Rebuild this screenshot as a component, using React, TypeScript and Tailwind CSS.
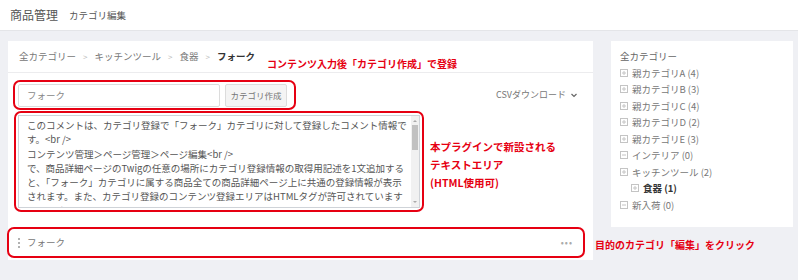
import React from "react";

const treeItems = [
  { label: "親カテゴリA (4)", open: false },
  { label: "親カテゴリB (3)", open: false },
  { label: "親カテゴリC (4)", open: false },
  { label: "親カテゴリD (2)", open: false },
  { label: "親カテゴリE (3)", open: false },
  { label: "インテリア (0)", open: true },
  { label: "キッチンツール (2)", open: false },
  { label: "食器 (1)", open: false, child: true },
  { label: "新入荷 (0)", open: true },
];

const commentLines = [
  "このコメントは、カテゴリ登録で「フォーク」カテゴリに対して登録したコメント情報で",
  "す。<br />",
  "コンテンツ管理＞ページ管理＞ページ編集<br />",
  "で、商品詳細ページのTwigの任意の場所にカテゴリ登録情報の取得用記述を1文追加する",
  "と、「フォーク」カテゴリに属する商品全ての商品詳細ページ上に共通の登録情報が表示",
  "されます。また、カテゴリ登録のコンテンツ登録エリアはHTMLタグが許可されています",
  "ので、<br />",
];

const TreeIcon = ({ open }: { open: boolean }) => (
  <svg width="8" height="8" viewBox="0 0 8 8" className="shrink-0">
    <rect x="0.5" y="0.5" width="7" height="7" fill="none" stroke="#c4c4c4" />
    <line x1="2" y1="4" x2="6" y2="4" stroke="#c4c4c4" />
    {!open && <line x1="4" y1="2" x2="4" y2="6" stroke="#c4c4c4" />}
  </svg>
);

export default function App() {
  return (
    <div className="relative w-[798px] h-[280px] overflow-hidden bg-[#eff0f4] font-['Noto_Sans_CJK_JP','Noto_Sans',sans-serif]">
      {/* header */}
      <div className="h-[31px] bg-white border-b border-[#e4e5e8] flex items-center pl-[10px] gap-[11px]">
        <span className="text-[12px] text-[#555]">商品管理</span>
        <span className="text-[9.5px] text-[#555]">カテゴリ編集</span>
      </div>

      <div className="flex pt-[10px] pl-[8px] gap-[18px]">
        {/* main card */}
        <div className="relative w-[585px] h-[219px] bg-white">
          <div className="h-[32px] border-b border-[#ececee] flex items-center pl-[11px] gap-[7px] text-[9.5px] text-[#777]">
            <span>全カテゴリー</span>
            <span className="text-[#bbb] text-[8px]">&gt;</span>
            <span>キッチンツール</span>
            <span className="text-[#bbb] text-[8px]">&gt;</span>
            <span>食器</span>
            <span className="text-[#bbb] text-[8px]">&gt;</span>
            <span className="font-bold text-[#333]">フォーク</span>
          </div>
          <span className="absolute left-[259px] top-[15px] text-[10px] font-bold text-[#e60012]">
            コンテンツ入力後「カテゴリ作成」で登録
          </span>

          <div className="flex items-center justify-between pr-[15px] mt-[7px]">
            <div className="ml-[5px] w-[283px] h-[30px] border-2 border-[#e60012] rounded-[7px] flex items-center pl-[3px] gap-[5px]">
              <div className="w-[202px] h-[23px] border border-[#dcdcdc] rounded-[2px] flex items-center pl-[8px] text-[9.5px] text-[#888]">
                フォーク
              </div>
              <div className="w-[62px] h-[23px] border border-[#dcdcdc] bg-[#f4f4f4] rounded-[2px] flex items-center justify-center text-[8.5px] text-[#777]">
                カテゴリ作成
              </div>
            </div>
            <div className="flex items-center gap-[4px] text-[9px] text-[#777]">
              <span>CSVダウンロード</span>
              <svg width="8" height="8" viewBox="0 0 8 8">
                <path d="M1.5 3 L4 5.5 L6.5 3" fill="none" stroke="#666" strokeWidth="1.2" />
              </svg>
            </div>
          </div>

          <div className="ml-[6px] mt-[1px] w-[410px] h-[101px] border-2 border-[#e60012] rounded-[7px] p-[2px]">
            <div className="relative w-full h-full border border-[#cfd3d8] overflow-hidden pl-[8px] pt-[2px]">
              {commentLines.map((l, i) => (
                <div key={i} className="whitespace-nowrap text-[9.5px] leading-[14.3px] text-[#555]">
                  {l}
                </div>
              ))}
              <div className="absolute right-0 top-0 bottom-0 w-[8px] bg-[#f1f1f1] flex flex-col items-center">
                <svg width="6" height="6" viewBox="0 0 6 6" className="mt-[2px]">
                  <path d="M1 4 L3 2 L5 4Z" fill="#aaa" />
                </svg>
                <div className="w-[6px] h-[25px] bg-[#c1c1c1] mt-[1px]" />
                <div className="flex-1" />
                <svg width="6" height="6" viewBox="0 0 6 6" className="mb-[2px]">
                  <path d="M1 2 L3 4 L5 2Z" fill="#aaa" />
                </svg>
              </div>
            </div>
          </div>

          <div className="-ml-[1px] mt-[15px] w-[578px] h-[31px] border-2 border-[#e60012] rounded-[7px] flex items-center justify-between pl-[9px] pr-[10px]">
            <div className="flex items-center gap-[7px]">
              <div className="flex flex-col gap-[2px]">
                <div className="w-[2px] h-[2px] rounded-full bg-[#999]" />
                <div className="w-[2px] h-[2px] rounded-full bg-[#999]" />
                <div className="w-[2px] h-[2px] rounded-full bg-[#999]" />
              </div>
              <span className="text-[9.5px] text-[#777]">フォーク</span>
            </div>
            <span className="text-[9px] text-[#aaa] tracking-[1px]">•••</span>
          </div>
        </div>

        {/* tree card */}
        <div className="w-[182px] h-[186px] bg-white pl-[9px] pt-[7px]">
          <div className="text-[9.5px] text-[#666] leading-[16.5px]">全カテゴリー</div>
          {treeItems.map((t, i) => (
            <div
              key={i}
              className={
                t.child
                  ? "flex items-center gap-[4px] h-[16.5px] pl-[11px] text-[9.5px] font-bold text-[#333]"
                  : "flex items-center gap-[4px] h-[16.5px] text-[9.5px] text-[#777]"
              }
            >
              <TreeIcon open={t.open} />
              <span>{t.label}</span>
            </div>
          ))}
        </div>
      </div>

      {/* annotations */}
      <div className="absolute left-[430px] top-[140px] flex flex-col gap-[5px] text-[10.5px] font-bold text-[#e60012] leading-[13px]">
        <span>本プラグインで新設される</span>
        <span>テキストエリア</span>
        <span>(HTML使用可)</span>
      </div>
      <span className="absolute left-[595px] top-[237px] text-[10px] font-bold text-[#e60012]">
        目的のカテゴリ「編集」をクリック
      </span>
    </div>
  );
}
